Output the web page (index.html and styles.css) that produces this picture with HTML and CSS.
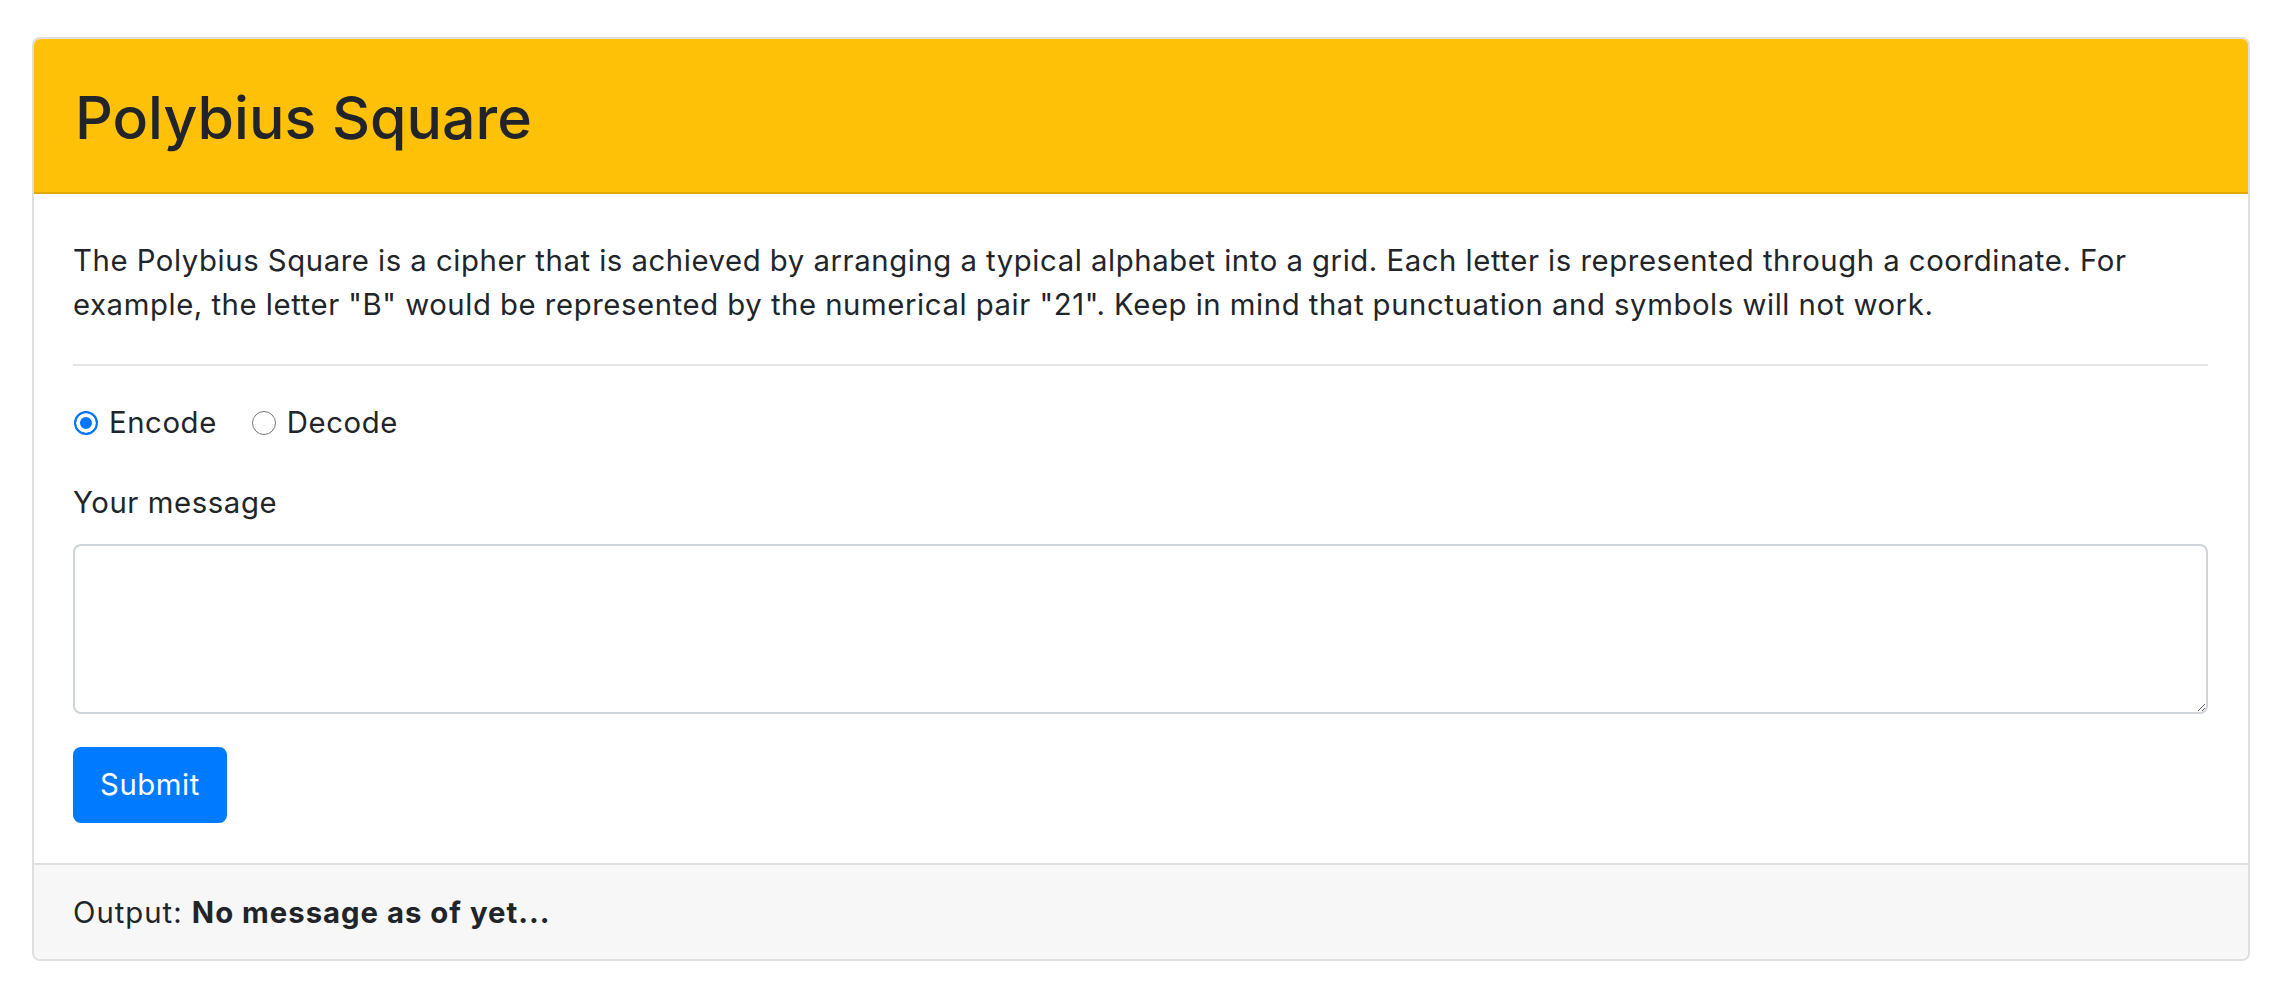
FILE: index.html
```html
<!DOCTYPE html>
<html lang="en">
<head>
<meta charset="utf-8">
<title>Polybius Square</title>
<link rel="stylesheet" href="styles.css">
</head>
<body>
<div class="page">
  <div class="card">
    <div class="card-header">
      <h1 class="title">Polybius Square</h1>
    </div>
    <div class="card-body">
      <p class="intro">The Polybius Square is a cipher that is achieved by arranging a typical alphabet into a grid. Each letter is represented through a coordinate. For example, the letter "B" would be represented by the numerical pair "21". Keep in mind that punctuation and symbols will not work.</p>
      <hr class="divider">
      <div class="radios">
        <label class="check"><input type="radio" name="mode" class="radio" checked><span>Encode</span></label>
        <label class="check"><input type="radio" name="mode" class="radio"><span>Decode</span></label>
      </div>
      <label class="field-label" for="msg">Your message</label>
      <textarea id="msg" class="message"></textarea>
      <button class="submit" type="button">Submit</button>
    </div>
    <div class="card-footer">Output: <strong>No message as of yet...</strong></div>
  </div>
</div>
</body>
</html>
```

FILE: styles.css
```css
html, body {
  margin: 0;
  padding: 0;
  background: #ffffff;
}
body {
  font-family: Inter, "Noto Sans", "Liberation Sans", sans-serif;
  color: #212529;
  font-size: 29.3px;
  line-height: 44px;
  letter-spacing: 0.6px;
}
.page {
  padding: 37px 34px 38px 32px;
}
.card {
  border: 2px solid #dfdfdf;
  border-radius: 8px;
  overflow: hidden;
  background: #ffffff;
}
.card-header {
  background: #ffc107;
  border-bottom: 2px solid #dfaa06;
  padding: 42px 41px 37px;
}
.title {
  margin: 0;
  font-size: 59px;
  line-height: 74px;
  font-weight: 500;
  letter-spacing: 0;
  color: #212529;
}
.card-body {
  padding: 45px 40px 40px 39px;
  display: flex;
  flex-direction: column;
  align-items: flex-start;
}
.intro {
  margin: 0;
  word-spacing: -0.3px;
}
.divider {
  align-self: stretch;
  margin: 37px 0 0;
  border: 0;
  border-top: 2px solid #e5e5e5;
  height: 0;
}
.radios {
  display: flex;
  gap: 34px;
  margin-top: 35px;
}
.check {
  display: flex;
  align-items: center;
  gap: 11px;
}
.radio {
  appearance: none;
  -webkit-appearance: none;
  margin: 0 0 0 1px;
  width: 24px;
  height: 24px;
  border-radius: 50%;
  border: 1.5px solid #767676;
  background: #ffffff;
  box-sizing: border-box;
}
.radio:checked {
  border: 2px solid #0075ff;
  background: #0075ff;
  box-shadow: inset 0 0 0 4px #ffffff;
}
.field-label {
  margin-top: 36px;
}
.message {
  align-self: stretch;
  margin-top: 19px;
  height: 170px;
  box-sizing: border-box;
  border: 2px solid #ced4da;
  border-radius: 8px;
  font: inherit;
  padding: 11px 22px;
  resize: vertical;
}
.submit {
  margin-top: 33px;
  font: inherit;
  letter-spacing: 0.6px;
  color: #ffffff;
  background: #007bff;
  border: 2px solid #007bff;
  border-radius: 8px;
  padding: 14px 25px;
  line-height: 44px;
}
.card-footer {
  background: #f7f7f7;
  border-top: 2px solid #dfdfdf;
  padding: 26px 39px 24px;
  letter-spacing: 1px;
}
.card-footer strong {
  font-weight: 700;
}
```
